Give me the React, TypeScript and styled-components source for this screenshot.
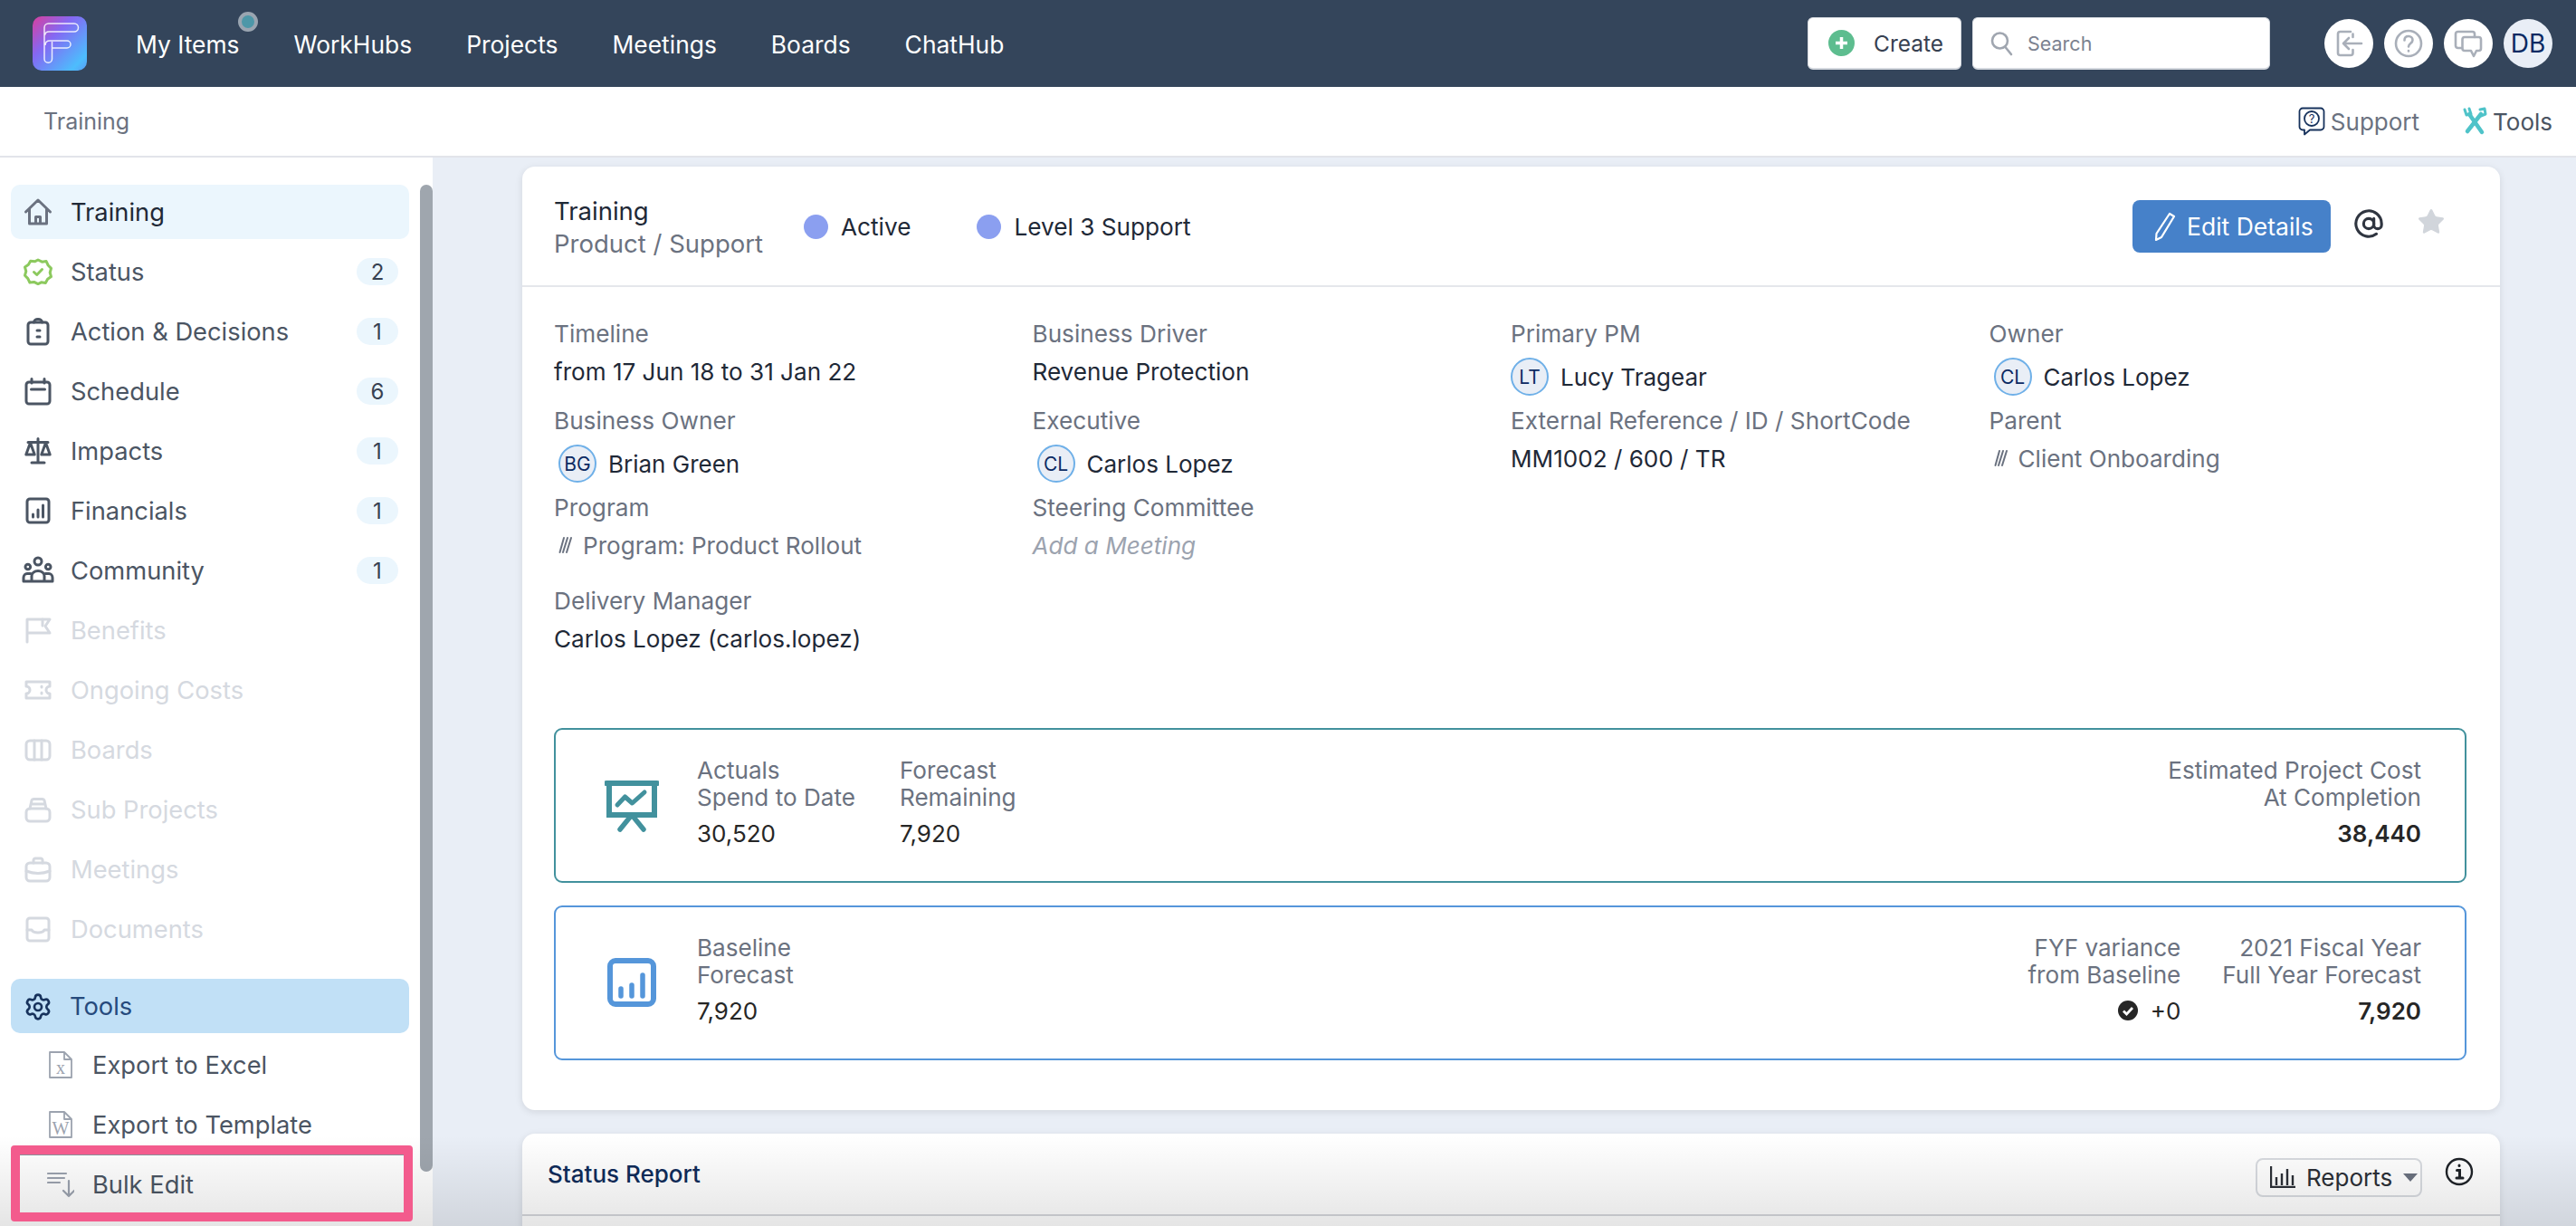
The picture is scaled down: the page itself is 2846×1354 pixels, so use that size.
import React from 'react';
import styled, { createGlobalStyle } from 'styled-components';
import { Settings, AtSign, Star } from 'lucide-react';

const GlobalStyle = createGlobalStyle`
  html, body {
    margin: 0;
    padding: 0;
    background: #e9eef6;
  }
  * {
    box-sizing: border-box;
  }
`;

// Page frame
const Page = styled.div`
  position: relative;
  width: 2846px;
  height: 1354px;
  overflow: hidden;
  font-family: Inter, 'Noto Sans', sans-serif;
  font-size: 26px;
  color: #1f2937;
  background: #e9eef6;
`;

const BottomFade = styled.div`
  position: absolute;
  left: 0;
  right: 0;
  bottom: 0;
  height: 100px;
  background: linear-gradient(to bottom, rgba(0, 0, 0, 0), rgba(0, 0, 0, 0.1));
  z-index: 5;
`;

// Top bar
const TopBar = styled.header`
  display: flex;
  align-items: center;
  height: 96px;
  padding: 0 26px 0 36px;
  background: #34455b;
`;

const Logo = styled.svg`
  width: 60px;
  height: 60px;
  flex: none;
`;

const MainNav = styled.nav`
  display: flex;
  gap: 60px;
  margin-left: 54px;
  margin-top: 2px;
`;

const MainNavItem = styled.span`
  position: relative;
  color: #fff;
  font-size: 26.4px;
  line-height: 32px;
  font-weight: 400;
  white-space: nowrap;
`;

const NotifyDot = styled.i`
  position: absolute;
  left: 113px;
  top: -20px;
  width: 22px;
  height: 22px;
  border-radius: 50%;
  background: #4d97a8;
  border: 4px solid #9aa5b1;
`;

const TopRight = styled.div`
  display: flex;
  align-items: center;
  margin-left: auto;
`;

const CreateButton = styled.button`
  display: flex;
  align-items: center;
  width: 170px;
  height: 58px;
  padding: 0 0 0 22px;
  background: #fff;
  border: 1px solid #d4d8de;
  border-bottom-width: 2px;
  border-radius: 6px;
  font: 400 24.5px Inter, sans-serif;
  color: #374151;
`;

const PlusCircle = styled.svg`
  width: 29px;
  height: 29px;
  margin-right: 21px;
`;

const SearchBox = styled.div`
  display: flex;
  align-items: center;
  width: 329px;
  height: 58px;
  margin-left: 12px;
  padding-left: 19px;
  background: #fff;
  border: 1px solid #d4d8de;
  border-bottom-width: 2px;
  border-radius: 6px;
  font-size: 21.5px;
  color: #7b8290;
`;

const SearchIcon = styled.svg`
  width: 25px;
  height: 28px;
  margin-right: 16px;
`;

const RoundGroup = styled.div`
  display: flex;
  gap: 12px;
  margin-left: 60px;
`;

const RoundButton = styled.div<{ $tint?: boolean }>`
  display: flex;
  align-items: center;
  justify-content: center;
  width: 54px;
  height: 54px;
  border-radius: 50%;
  background: ${(p) => (p.$tint ? '#e9eef6' : '#fff')};
  color: #0b2a63;
  font-size: 28px;
`;

const RoundIcon = styled.svg`
  width: 32px;
  height: 32px;
  fill: none;
  stroke: #a9afb9;
  stroke-width: 2.6;
  stroke-linecap: round;
  stroke-linejoin: round;
`;

// Breadcrumb bar
const SubBar = styled.div`
  display: flex;
  align-items: center;
  height: 78px;
  padding: 0 26px 0 48px;
  background: #fff;
  border-bottom: 2px solid #e2e4ea;
`;

const Crumb = styled.span`
  font-size: 25px;
  color: #6b7280;
`;

const SubLinks = styled.div`
  display: flex;
  align-items: center;
  margin-left: auto;
`;

const SubLink = styled.span<{ $dark?: boolean }>`
  display: flex;
  align-items: center;
  gap: 6px;
  margin-left: 47px;
  font-size: 26px;
  color: ${(p) => (p.$dark ? '#4b5563' : '#6b7280')};
`;

// Body
const Body = styled.div`
  display: flex;
  height: 1180px;
`;

const Sidebar = styled.aside`
  position: relative;
  flex: none;
  width: 478px;
  padding-top: 30px;
  background: #fff;
`;

const ScrollThumb = styled.div`
  position: absolute;
  left: 464px;
  top: 30px;
  width: 14px;
  height: 1090px;
  border-radius: 7px;
  background: #9fa6ae;
`;

const SideItem = styled.div<{ $state?: 'current' | 'open' | 'off' }>`
  display: flex;
  align-items: center;
  gap: 21px;
  width: 440px;
  height: 60px;
  margin: 0 0 6px 12px;
  padding: 0 12px 0 15px;
  border-radius: 10px;
  font-size: 27.3px;
  background: ${(p) => (p.$state === 'current' ? '#ebf6fd' : p.$state === 'open' ? '#c1e0f6' : 'transparent')};
  color: ${(p) =>
    p.$state === 'current' ? '#1f2937' : p.$state === 'open' ? '#264a7c' : p.$state === 'off' ? '#d5d9e0' : '#4b5563'};
`;

const ToolsItem = styled(SideItem)`
  margin-top: 25px;
  margin-bottom: 2px;
`;

const SideIcon = styled.svg<{ $stroke?: string }>`
  flex: none;
  width: 30px;
  height: 30px;
  fill: none;
  overflow: visible;
  stroke: ${(p) => p.$stroke ?? 'currentColor'};
  stroke-width: 3;
  stroke-linecap: round;
  stroke-linejoin: round;
`;

const SideLabel = styled.span`
  flex: 1;
  white-space: nowrap;
`;

const Badge = styled.span`
  display: flex;
  align-items: center;
  justify-content: center;
  min-width: 46px;
  height: 30px;
  padding: 0 14px;
  border-radius: 15px;
  background: #ebf6fd;
  font-size: 24px;
  color: #374151;
`;

const SubItem = styled.div`
  display: flex;
  align-items: center;
  gap: 22px;
  height: 66px;
  padding-left: 54px;
  font-size: 27.3px;
  color: #4b5563;
`;

const SubIcon = styled.svg`
  flex: none;
  width: 26px;
  height: 32px;
  fill: none;
  stroke: #9ca3af;
  stroke-width: 1.8;
  stroke-linecap: round;
  stroke-linejoin: round;
`;

const BulkIcon = styled(SubIcon)`
  width: 30px;
  margin: 0 -2px;
  stroke-width: 2.2;
`;

const GlyphInIcon = styled.text`
  font-family: 'Liberation Serif', serif;
  font-size: 20px;
  fill: #9ca3af;
  stroke: none;
  text-anchor: middle;
`;

const PinkOutline = styled.div`
  position: absolute;
  left: 12px;
  top: 1265px;
  width: 444px;
  height: 84px;
  border: 10px solid #f35b8d;
  border-radius: 4px;
  box-shadow: inset 0 1px 0 #8a8f99;
  z-index: 6;
`;

// Main column
const Main = styled.main`
  flex: 1;
  min-width: 0;
  padding: 10px 84px 0 99px;
  overflow: hidden;
`;

const Card = styled.section`
  background: #fff;
  border-radius: 14px;
  box-shadow: 0 2px 8px rgba(0, 0, 0, 0.1);
`;

const DetailCard = styled(Card)`
  height: 1042px;
  margin-bottom: 26px;
`;

const CardHeader = styled.div`
  display: flex;
  align-items: center;
  height: 133px;
  padding: 0 60px 0 35px;
  border-bottom: 2px solid #e5e7eb;
`;

const TitleBlock = styled.div`
  display: flex;
  flex-direction: column;
  line-height: 36px;
  padding-top: 2px;
`;

const CardTitle = styled.span`
  font-size: 27.5px;
  color: #1f2937;
`;

const CardSubtitle = styled.span`
  font-size: 27.5px;
  color: #6b7280;
`;

const StatePill = styled.span`
  display: flex;
  align-items: center;
  gap: 14px;
  margin-left: 45px;
  padding-top: 2px;
  font-size: 26.2px;
  color: #1f2937;

  & + & {
    margin-left: 73px;
  }

  &::before {
    content: '';
    width: 27px;
    height: 27px;
    border-radius: 50%;
    background: #8b9ff0;
  }
`;

const HeaderActions = styled.div`
  display: flex;
  align-items: center;
  margin-left: auto;
`;

const EditButton = styled.button`
  display: flex;
  align-items: center;
  gap: 12px;
  width: 219px;
  height: 58px;
  padding: 0 0 0 22px;
  border: 0;
  border-radius: 8px;
  background: #4681c9;
  color: #fff;
  font: 400 26.5px Inter, sans-serif;
  white-space: nowrap;
`;

const PencilIcon = styled.svg`
  width: 26px;
  height: 32px;
  fill: none;
  stroke: #fff;
  stroke-width: 2.2;
  stroke-linejoin: round;
`;

const AtWrap = styled.span`
  display: flex;
  margin: -6px 0 0 25px;
  color: #2f3540;
`;

const StarWrap = styled.span`
  display: flex;
  margin: -10px 0 0 36px;
  color: #d1d5db;
`;

// Fields
const FieldGrid = styled.div`
  display: grid;
  grid-template-columns: repeat(4, 528.5px);
  height: 487px;
  padding: 30px 0 0 35px;
`;

const FieldColumn = styled.div`
  display: flex;
  flex-direction: column;
`;

const FieldLabel = styled.div`
  height: 42px;
  line-height: 44px;
  font-size: 26.2px;
  color: #6b7280;
  white-space: nowrap;
`;

const FieldValue = styled.div<{ $after?: number; $muted?: boolean; $empty?: boolean }>`
  display: flex;
  align-items: center;
  height: 42px;
  margin-bottom: ${(p) => p.$after ?? 12}px;
  font-size: 26.1px;
  font-style: ${(p) => (p.$empty ? 'italic' : 'normal')};
  color: ${(p) => (p.$empty ? '#9ca3af' : p.$muted ? '#6b7280' : '#1f2937')};
  white-space: nowrap;
`;

const PersonRow = styled.div<{ $inset?: number }>`
  display: flex;
  align-items: center;
  gap: 13px;
  height: 54px;
  padding-left: ${(p) => p.$inset ?? 5}px;
  font-size: 26px;
  color: #1f2937;
`;

const Avatar = styled.span`
  display: flex;
  align-items: center;
  justify-content: center;
  width: 42px;
  height: 42px;
  border-radius: 50%;
  border: 2px solid #6fb0e8;
  background: #e9eef6;
  color: #0b2a63;
  font-size: 21px;
`;

const SlashIcon = styled.svg`
  width: 16px;
  height: 20px;
  margin: 0 11px 0 5px;
  fill: none;
  stroke: #6b7280;
  stroke-width: 2;
  stroke-linecap: round;
`;

// Money boxes
const MoneyBox = styled.div<{ $color: string }>`
  display: flex;
  align-items: flex-start;
  width: 2113px;
  height: 171px;
  margin: 0 0 25px 35px;
  padding: 30px 48px 0 0;
  border: 2px solid ${(p) => p.$color};
  border-radius: 9px;
`;

const MoneyIconSlot = styled.div`
  display: flex;
  justify-content: center;
  flex: none;
  width: 60px;
  margin: 26px 42px 0 54px;
`;

const Stat = styled.div<{ $right?: boolean; $width?: number }>`
  display: flex;
  flex-direction: column;
  align-items: ${(p) => (p.$right ? 'flex-end' : 'flex-start')};
  width: ${(p) => (p.$width ? `${p.$width}px` : 'auto')};
  margin-left: ${(p) => (p.$right ? '46px' : '0')};
  text-align: ${(p) => (p.$right ? 'right' : 'left')};
`;

const Spacer = styled.div`
  flex: 1;
`;

const StatLabel = styled.div`
  height: 30px;
  line-height: 30px;
  font-size: 26.1px;
  color: #6b7280;
  white-space: nowrap;
`;

const StatValue = styled.div<{ $bold?: boolean }>`
  display: flex;
  align-items: center;
  gap: 14px;
  height: 30px;
  margin-top: 9px;
  font-size: 26px;
  font-weight: ${(p) => (p.$bold ? 600 : 400)};
  color: #262626;
`;

// Second card
const ReportCard = styled(Card)`
  height: 200px;
  border-radius: 14px 14px 0 0;
`;

const ReportHeader = styled.div`
  display: flex;
  align-items: center;
  height: 91px;
  padding: 0 29px 0 28px;
  border-bottom: 2px solid #d5d7dc;
`;

const ReportTitle = styled.span`
  font-size: 26px;
  font-weight: 500;
  color: #0f2c5a;
`;

const ReportsButton = styled.button`
  display: flex;
  align-items: center;
  gap: 12px;
  width: 184px;
  height: 43px;
  margin: 7px 0 0 auto;
  padding: 0 0 0 14px;
  background: #fff;
  border: 2px solid #d8dbe0;
  border-radius: 8px;
  font: 400 26px Inter, sans-serif;
  color: #2b2f36;
`;

const Caret = styled.i`
  width: 0;
  height: 0;
  border-left: 8px solid transparent;
  border-right: 8px solid transparent;
  border-top: 9px solid #6b7280;
`;

const InfoWrap = styled.svg`
  width: 32px;
  height: 32px;
  margin: -6px 0 0 25px;
  fill: none;
  stroke: #1f2328;
  stroke-width: 2.4;
  stroke-linecap: round;
`;

const sideItems: { label: string; badge?: number; icon: React.ReactNode; off?: boolean }[] = [
  {
    label: 'Status',
    badge: 2,
    icon: (
      <g stroke="#8cc95e">
        <path d="M15 2l4.400 2.200 4.700-.6 2.100 4.400 3.300 3.400-1.300 4.600 1.300 4.600-3.900 2.700-2.300 4.100-4.700-.6L15 28.600l-4.400-2.200-4.700.6-2.100-4.400-3.300-3.400 1.300-4.600-1.300-4.600 3.900-2.700 2.300-4.100 4.700.6z" />
        <path d="M10.500 15.500l3.200 3 5.800-6" />
      </g>
    ),
  },
  {
    label: 'Action & Decisions',
    badge: 1,
    icon: (
      <>
        <rect x="4" y="5" width="22" height="24" rx="3" />
        <path d="M10.500 5c0-2 2-3.500 4.500-3.500S19.500 3 19.500 5" />
        <path d="M14 14h3M14 21h3" strokeWidth="3" />
      </>
    ),
  },
  {
    label: 'Schedule',
    badge: 6,
    icon: (
      <>
        <rect x="2" y="5" width="26" height="24" rx="3" />
        <path d="M8 1.500V6M22 1.500V6M7.500 13h15" />
      </>
    ),
  },
  {
    label: 'Impacts',
    badge: 1,
    icon: (
      <>
        <path d="M15 1.500V27M8 28h14M4 5.500h22" />
        <path d="M6.500 6L1.800 19h9.400zM23.500 6l-4.700 13h9.400z" />
      </>
    ),
  },
  {
    label: 'Financials',
    badge: 1,
    icon: (
      <>
        <rect x="3" y="2" width="24" height="26" rx="3" />
        <path d="M9.500 22v-3M15 22v-8M20.500 22V9" />
      </>
    ),
  },
  {
    label: 'Community',
    badge: 1,
    icon: (
      <>
        <circle cx="15" cy="5" r="4" />
        <circle cx="3.800" cy="11" r="2.800" />
        <circle cx="26.200" cy="11" r="2.800" />
        <path d="M-1 27v-4c0-2.500 2-4.500 4-4.500h4M31 27v-4c0-2.500-2-4.500-4-4.500h-4M-1 27h32M8 27v-6c0-3 3-5.500 7-5.500s7 2.500 7 5.500v6" />
      </>
    ),
  },
  {
    label: 'Benefits',
    off: true,
    icon: (
      <>
        <path d="M3 28V3h25l-5 7.500 5 7.500H3" />
        <path d="M20 3v7" />
      </>
    ),
  },
  {
    label: 'Ongoing Costs',
    off: true,
    icon: (
      <>
        <path d="M2 6h26v5a4 4 0 0 0 0 8v5H2v-5a4 4 0 0 0 0-8z" />
        <path d="M19 11v1M19 18v1" />
      </>
    ),
  },
  {
    label: 'Boards',
    off: true,
    icon: (
      <>
        <rect x="2" y="5" width="26" height="21" rx="4" />
        <path d="M11 5v21M19 5v21" />
      </>
    ),
  },
  {
    label: 'Sub Projects',
    off: true,
    icon: (
      <>
        <rect x="2" y="14" width="26" height="14" rx="4" />
        <path d="M6 14l2-9c.3-1 1-1.500 2-1.500h10c1 0 1.700.5 2 1.500l2 9M7 9h16" />
      </>
    ),
  },
  {
    label: 'Meetings',
    off: true,
    icon: (
      <>
        <rect x="2" y="8" width="26" height="20" rx="4" />
        <path d="M10 8V5c0-1 1-2 2-2h6c1 0 2 1 2 2v3M2 17c8 3 18 3 26 0" />
      </>
    ),
  },
  {
    label: 'Documents',
    off: true,
    icon: (
      <>
        <rect x="3" y="3" width="24" height="25" rx="3" />
        <path d="M3 16l5 0c2 4 12 4 14 0l5 0" />
      </>
    ),
  },
];

const Slashes = () => (
  <SlashIcon viewBox="0 0 16 20">
    <path d="M6 2L1.500 18M10 2L5 18M14 2L9 18" />
  </SlashIcon>
);

const App: React.FC = () => {
  return (
    <Page>
      <GlobalStyle />
      <TopBar>
        <Logo viewBox="0 0 60 60">
          <defs>
            <linearGradient id="logoFill" x1="0" y1="0" x2="1" y2="1">
              <stop offset="0" stopColor="#d93f9d" />
              <stop offset="0.38" stopColor="#8468f3" />
              <stop offset="0.85" stopColor="#4dbdfd" />
              <stop offset="1" stopColor="#5a9cf5" />
            </linearGradient>
          </defs>
          <rect width="60" height="60" rx="10" fill="url(#logoFill)" />
          <path
            d="M21.500 28v19a4.200 4.200 0 0 1-8.500 0V12.500A4.500 4.500 0 0 1 17.500 8H46a4.500 4.500 0 0 1 0 9H18a4.500 4.500 0 0 0-4.500 4M14 32c0-3 2-5 5-5h19a4 4 0 0 1 0 8H21.500"
            fill="none"
            stroke="#fff"
            strokeOpacity="0.85"
            strokeWidth="1.500"
          />
        </Logo>
        <MainNav>
          <MainNavItem>
            My Items
            <NotifyDot />
          </MainNavItem>
          <MainNavItem>WorkHubs</MainNavItem>
          <MainNavItem>Projects</MainNavItem>
          <MainNavItem>Meetings</MainNavItem>
          <MainNavItem>Boards</MainNavItem>
          <MainNavItem>ChatHub</MainNavItem>
        </MainNav>
        <TopRight>
          <CreateButton>
            <PlusCircle viewBox="0 0 29 29">
              <circle cx="14.500" cy="14.500" r="14.500" fill="#5dbd8f" />
              <path d="M14.500 8v13M8 14.500h13" stroke="#fff" strokeWidth="3.500" />
            </PlusCircle>
            Create
          </CreateButton>
          <SearchBox>
            <SearchIcon viewBox="0 0 25 28" fill="none" stroke="#a0a6b0" strokeWidth="2.600" strokeLinecap="round">
              <circle cx="10.500" cy="11" r="8.500" />
              <path d="M16.500 18l6.500 8" />
            </SearchIcon>
            Search
          </SearchBox>
          <RoundGroup>
            <RoundButton>
              <RoundIcon viewBox="0 0 32 32">
                <path d="M18 3H6.500A2.500 2.500 0 0 0 4 5.500v21A2.500 2.500 0 0 0 6.500 29H18a2.500 2.500 0 0 0 2.500-2.500V23M20.500 9V5.500" />
                <path d="M30 16H10M16 10l-6 6 6 6" />
              </RoundIcon>
            </RoundButton>
            <RoundButton>
              <RoundIcon viewBox="0 0 32 32">
                <circle cx="16" cy="16" r="14" />
                <path d="M11.500 12.500c0-3 2-4.500 4.500-4.500s4.500 1.700 4.500 4.200c0 3.800-4.500 3.800-4.500 7.300M16 24v.5" />
              </RoundIcon>
            </RoundButton>
            <RoundButton>
              <RoundIcon viewBox="0 0 32 32">
                <path d="M9 21H4.500A2.500 2.500 0 0 1 2 18.500v-13A2.500 2.500 0 0 1 4.500 3h16A2.500 2.500 0 0 1 23 5.500V9" />
                <path d="M12 9h15.500A2.500 2.500 0 0 1 30 11.500v10a2.500 2.500 0 0 1-2.500 2.500H25l-3 6-3-6h-7a2.500 2.500 0 0 1-2.500-2.500v-10A2.500 2.500 0 0 1 12 9z" />
              </RoundIcon>
            </RoundButton>
            <RoundButton $tint>DB</RoundButton>
          </RoundGroup>
        </TopRight>
      </TopBar>

      <SubBar>
        <Crumb>Training</Crumb>
        <SubLinks>
          <SubLink>
            <svg width="30" height="32" viewBox="0 0 30 32" fill="none" stroke="#17325c" strokeWidth="1.800" strokeLinejoin="round">
              <path d="M5 1.500h20a3.500 3.500 0 0 1 3.500 3.500v17a3.500 3.500 0 0 1-3.500 3.500H13l-6 5v-5H5A3.500 3.500 0 0 1 1.500 22V5A3.500 3.500 0 0 1 5 1.500z" />
              <circle cx="15" cy="13" r="8" />
              <text x="15" y="18" textAnchor="middle" fontSize="13" fontFamily="Inter, sans-serif" fill="#17325c" stroke="none">?</text>
            </svg>
            Support
          </SubLink>
          <SubLink $dark>
            <svg width="28" height="32" viewBox="0 0 28 32" fill="none" stroke="#4fc3c9" strokeLinecap="round" strokeLinejoin="round">
              <path d="M8 8l14 20" strokeWidth="4.500" />
              <path d="M21 8L6 27" strokeWidth="4.500" />
              <path d="M3 3l2 6 5-1-2-6" strokeWidth="3" />
              <path d="M20 3l5-1 1 6-5 2" strokeWidth="3" />
            </svg>
            Tools
          </SubLink>
        </SubLinks>
      </SubBar>

      <Body>
        <Sidebar>
          <SideItem $state="current">
            <SideIcon viewBox="0 0 30 30" $stroke="#6b7280">
              <path d="M1.500 15L15 2 28.500 15M5.500 11.500V28h19V11.500M12.500 28v-7.500h5V28" />
            </SideIcon>
            <SideLabel>Training</SideLabel>
          </SideItem>
          {sideItems.map((item) => (
            <SideItem key={item.label} $state={item.off ? 'off' : undefined}>
              <SideIcon viewBox="0 0 30 30">{item.icon}</SideIcon>
              <SideLabel>{item.label}</SideLabel>
              {item.badge !== undefined && <Badge>{item.badge}</Badge>}
            </SideItem>
          ))}
          <ToolsItem $state="open">
            <Settings size={32} color="#17325c" strokeWidth={2} style={{ margin: '0 -2px -1px -1px', flex: 'none' }} />
            <SideLabel>Tools</SideLabel>
          </ToolsItem>
          <SubItem>
            <SubIcon viewBox="0 0 26 32">
              <path d="M1 2h16l8 8v20H1zM17 2v8h8" />
              <GlyphInIcon x="13" y="26">x</GlyphInIcon>
            </SubIcon>
            Export to Excel
          </SubItem>
          <SubItem>
            <SubIcon viewBox="0 0 26 32">
              <path d="M1 2h16l8 8v20H1zM17 2v8h8" />
              <GlyphInIcon x="13" y="27">W</GlyphInIcon>
            </SubIcon>
            Export to Template
          </SubItem>
          <SubItem>
            <BulkIcon viewBox="0 0 30 32">
              <path d="M1 4h20M1 9h18M1 14h13M24 12v17M18 23l6 6 6-6" />
            </BulkIcon>
            Bulk Edit
          </SubItem>
          <ScrollThumb />
        </Sidebar>

        <Main>
          <DetailCard>
            <CardHeader>
              <TitleBlock>
                <CardTitle>Training</CardTitle>
                <CardSubtitle>Product / Support</CardSubtitle>
              </TitleBlock>
              <StatePill>Active</StatePill>
              <StatePill>Level 3 Support</StatePill>
              <HeaderActions>
                <EditButton>
                  <PencilIcon viewBox="0 0 26 32">
                    <path d="M19 2l5 3-14 23-6 3 .5-7z" />
                  </PencilIcon>
                  Edit Details
                </EditButton>
                <AtWrap>
                  <AtSign size={34} strokeWidth={2.2} />
                </AtWrap>
                <StarWrap>
                  <Star size={32} fill="#d1d5db" strokeWidth={1} />
                </StarWrap>
              </HeaderActions>
            </CardHeader>

            <FieldGrid>
              <FieldColumn>
                <FieldLabel>Timeline</FieldLabel>
                <FieldValue>from 17 Jun 18 to 31 Jan 22</FieldValue>
                <FieldLabel>Business Owner</FieldLabel>
                <PersonRow>
                  <Avatar>BG</Avatar>
                  Brian Green
                </PersonRow>
                <FieldLabel>Program</FieldLabel>
                <FieldValue $after={19} $muted>
                  <Slashes />
                  Program: Product Rollout
                </FieldValue>
                <FieldLabel>Delivery Manager</FieldLabel>
                <FieldValue>Carlos Lopez (carlos.lopez)</FieldValue>
              </FieldColumn>
              <FieldColumn>
                <FieldLabel>Business Driver</FieldLabel>
                <FieldValue>Revenue Protection</FieldValue>
                <FieldLabel>Executive</FieldLabel>
                <PersonRow>
                  <Avatar>CL</Avatar>
                  Carlos Lopez
                </PersonRow>
                <FieldLabel>Steering Committee</FieldLabel>
                <FieldValue $empty>Add a Meeting</FieldValue>
              </FieldColumn>
              <FieldColumn>
                <FieldLabel>Primary PM</FieldLabel>
                <PersonRow $inset={0}>
                  <Avatar>LT</Avatar>
                  Lucy Tragear
                </PersonRow>
                <FieldLabel>External Reference / ID / ShortCode</FieldLabel>
                <FieldValue>MM1002 / 600 / TR</FieldValue>
              </FieldColumn>
              <FieldColumn>
                <FieldLabel>Owner</FieldLabel>
                <PersonRow>
                  <Avatar>CL</Avatar>
                  Carlos Lopez
                </PersonRow>
                <FieldLabel>Parent</FieldLabel>
                <FieldValue $muted>
                  <Slashes />
                  Client Onboarding
                </FieldValue>
              </FieldColumn>
            </FieldGrid>

            <MoneyBox $color="#42919d">
              <MoneyIconSlot>
                <svg width="60" height="57" viewBox="0 0 60 57" fill="none" stroke="#42919d" strokeLinecap="round" strokeLinejoin="round">
                  <path d="M2 3h56" strokeWidth="6" />
                  <path d="M5 4v34h50V4" strokeWidth="6" strokeLinejoin="miter" />
                  <path d="M14 27l8.500-9 8 7L44 13" strokeWidth="5" />
                  <path d="M17 54l13-16 13 16" strokeWidth="5.500" />
                </svg>
              </MoneyIconSlot>
              <Stat $width={224}>
                <StatLabel>Actuals</StatLabel>
                <StatLabel>Spend to Date</StatLabel>
                <StatValue>30,520</StatValue>
              </Stat>
              <Stat>
                <StatLabel>Forecast</StatLabel>
                <StatLabel>Remaining</StatLabel>
                <StatValue>7,920</StatValue>
              </Stat>
              <Spacer />
              <Stat $right>
                <StatLabel>Estimated Project Cost</StatLabel>
                <StatLabel>At Completion</StatLabel>
                <StatValue $bold>38,440</StatValue>
              </Stat>
            </MoneyBox>

            <MoneyBox $color="#5596da">
              <MoneyIconSlot>
                <svg width="54" height="54" viewBox="0 0 54 54" fill="none" stroke="#5596da" strokeLinecap="round">
                  <rect x="3" y="3" width="48" height="48" rx="6" strokeWidth="6" />
                  <path d="M15 42v-8M27 42V30M39 42V19" strokeWidth="5.500" />
                </svg>
              </MoneyIconSlot>
              <Stat>
                <StatLabel>Baseline</StatLabel>
                <StatLabel>Forecast</StatLabel>
                <StatValue>7,920</StatValue>
              </Stat>
              <Spacer />
              <Stat $right>
                <StatLabel>FYF variance</StatLabel>
                <StatLabel>from Baseline</StatLabel>
                <StatValue>
                  <svg width="22" height="22" viewBox="0 0 22 22">
                    <circle cx="11" cy="11" r="11" fill="#262626" />
                    <path d="M6 11.500l3.500 3.500L16 8" fill="none" stroke="#fff" strokeWidth="2.800" />
                  </svg>
                  +0
                </StatValue>
              </Stat>
              <Stat $right>
                <StatLabel>2021 Fiscal Year</StatLabel>
                <StatLabel>Full Year Forecast</StatLabel>
                <StatValue $bold>7,920</StatValue>
              </Stat>
            </MoneyBox>
          </DetailCard>

          <ReportCard>
            <ReportHeader>
              <ReportTitle>Status Report</ReportTitle>
              <ReportsButton>
                <svg width="28" height="24" viewBox="0 0 28 24" fill="none" stroke="#2b2f36" strokeWidth="2.400">
                  <path d="M1 0v23h27M7 21v-9M13 21V8M19 21V3M25 21V10" />
                </svg>
                Reports
                <Caret />
              </ReportsButton>
              <InfoWrap viewBox="0 0 32 32">
                <circle cx="16" cy="16" r="14" />
                <path d="M13.500 14.500H16.500V23M13 23h7M16 9v.5" strokeWidth="3" />
              </InfoWrap>
            </ReportHeader>
          </ReportCard>
        </Main>
      </Body>

      <BottomFade />
      <PinkOutline />
    </Page>
  );
};

export default App;
